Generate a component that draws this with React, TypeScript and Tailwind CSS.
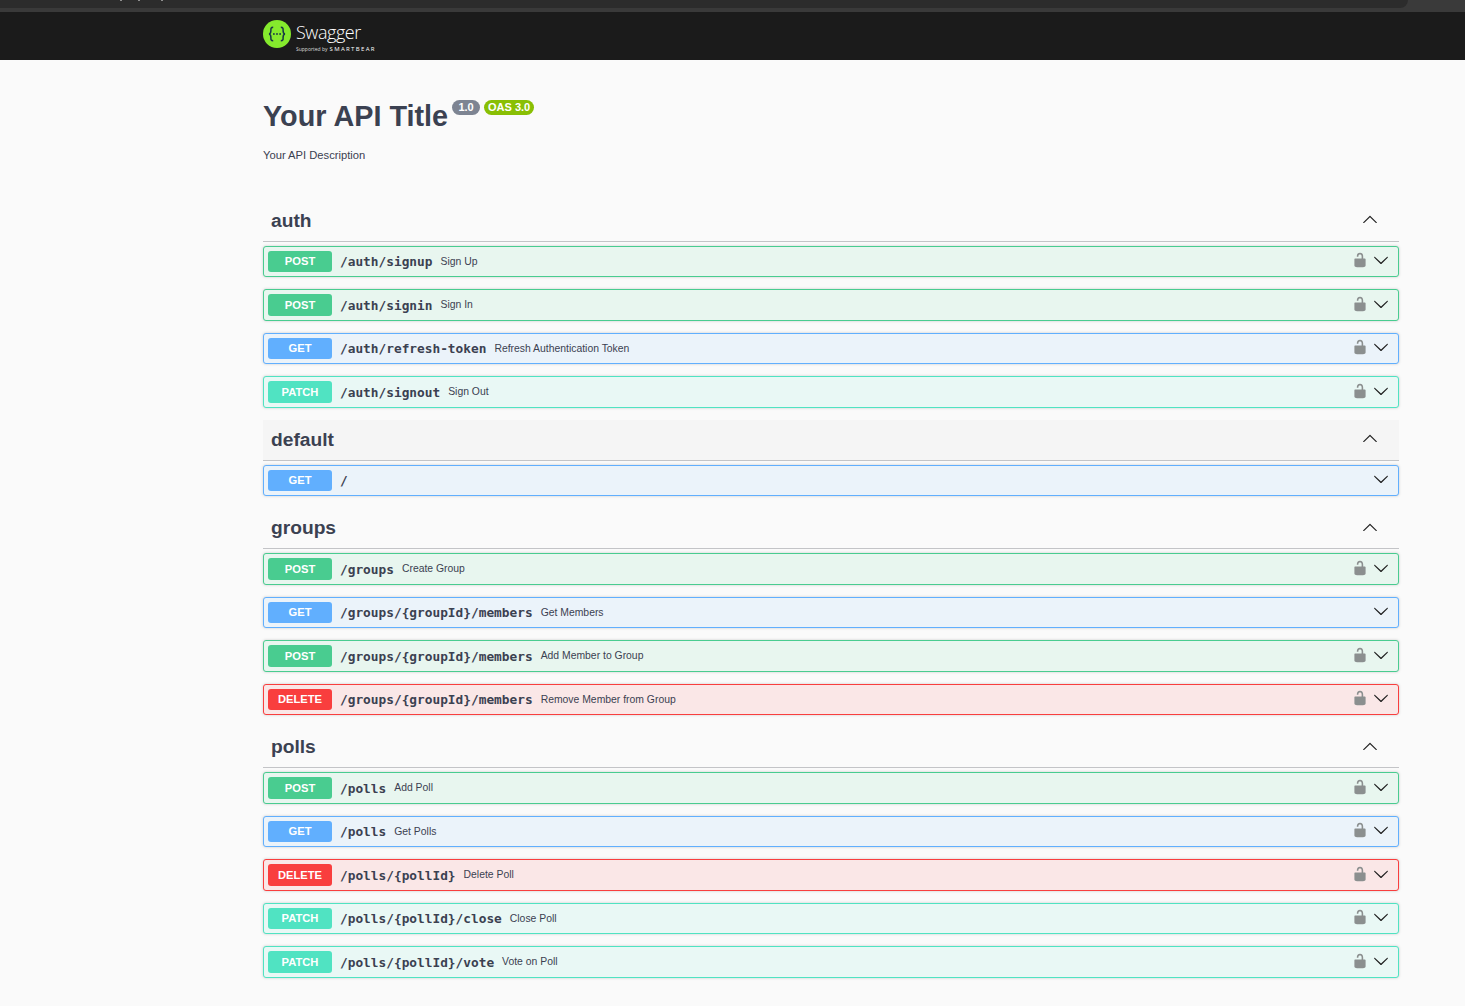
import React from 'react';

type Method = 'POST' | 'GET' | 'PATCH' | 'DELETE';

type Op = {
  method: Method;
  path: string;
  summary?: string;
  locked?: boolean;
};

const SECTIONS: { name: string; hovered?: boolean; ops: Op[] }[] = [
  {
    name: 'auth',
    ops: [
      { method: 'POST', path: '/auth/signup', summary: 'Sign Up', locked: true },
      { method: 'POST', path: '/auth/signin', summary: 'Sign In', locked: true },
      { method: 'GET', path: '/auth/refresh-token', summary: 'Refresh Authentication Token', locked: true },
      { method: 'PATCH', path: '/auth/signout', summary: 'Sign Out', locked: true },
    ],
  },
  {
    name: 'default',
    hovered: true,
    ops: [{ method: 'GET', path: '/' }],
  },
  {
    name: 'groups',
    ops: [
      { method: 'POST', path: '/groups', summary: 'Create Group', locked: true },
      { method: 'GET', path: '/groups/{groupId}/members', summary: 'Get Members' },
      { method: 'POST', path: '/groups/{groupId}/members', summary: 'Add Member to Group', locked: true },
      { method: 'DELETE', path: '/groups/{groupId}/members', summary: 'Remove Member from Group', locked: true },
    ],
  },
  {
    name: 'polls',
    ops: [
      { method: 'POST', path: '/polls', summary: 'Add Poll', locked: true },
      { method: 'GET', path: '/polls', summary: 'Get Polls', locked: true },
      { method: 'DELETE', path: '/polls/{pollId}', summary: 'Delete Poll', locked: true },
      { method: 'PATCH', path: '/polls/{pollId}/close', summary: 'Close Poll', locked: true },
      { method: 'PATCH', path: '/polls/{pollId}/vote', summary: 'Vote on Poll', locked: true },
    ],
  },
];

const ROW_STYLES: Record<Method, { row: string; badge: string }> = {
  POST: { row: 'border-[#49cc90] bg-[#e8f6ef]', badge: 'bg-[#49cc90]' },
  GET: { row: 'border-[#61affe] bg-[#ebf3fa]', badge: 'bg-[#61affe]' },
  PATCH: { row: 'border-[#50e3c2] bg-[#e9f8f5]', badge: 'bg-[#50e3c2]' },
  DELETE: { row: 'border-[#f93e3e] bg-[#fae7e7]', badge: 'bg-[#f93e3e]' },
};

const ChevronDown = () => (
  <svg viewBox="0 0 20 20" className="h-4 w-4 fill-[#1f1f1f]">
    <path d="M17.418 6.109c.272-.268.709-.268.979 0s.271.701 0 .969l-7.908 7.83c-.27.268-.707.268-.979 0l-7.908-7.83c-.27-.268-.27-.701 0-.969.271-.268.709-.268.979 0L10 13.25l7.418-7.141z" />
  </svg>
);

const ChevronUp = () => (
  <svg viewBox="0 0 20 20" className="mb-1 h-4 w-4 fill-[#1f1f1f]">
    <path d="M17.418 14.908c.272.268.709.268.979 0s.271-.701 0-.969l-7.908-7.83c-.27-.268-.707-.268-.979 0l-7.908 7.83c-.27.268-.27.701 0 .969.271.268.709.268.979 0L10 7.767l7.418 7.141z" />
  </svg>
);

const OpenLock = () => (
  <svg viewBox="0 0 20 20" className="h-4 w-4 fill-[#8b8f8f]">
    <path d="M15.8 8H14V5.6C14 2.703 12.665 1 10 1 7.334 1 6 2.703 6 5.6V6h2v-.801C8 3.754 8.797 3 10 3c1.203 0 2 .754 2 2.199V8H4c-.553 0-1 .646-1 1.199V17c0 .549.428 1.139.951 1.307l1.197.387C5.672 18.861 6.55 19 7.1 19h5.8c.549 0 1.428-.139 1.951-.307l1.196-.387c.524-.167.953-.757.953-1.306V9.199C17 8.646 16.352 8 15.8 8z" />
  </svg>
);

const SwaggerMark = () => (
  <svg viewBox="0 0 28 28" className="h-7 w-7">
    <circle cx="14" cy="14" r="14" fill="#85ea2d" />
    <path
      d="M10.2 7.2c-2.6 0-2.3 1.5-2.3 3.3 0 1.8-.4 3.3-1.9 3.5 1.5.2 1.9 1.7 1.9 3.5 0 1.8-.3 3.3 2.3 3.3M17.8 7.2c2.6 0 2.3 1.5 2.3 3.3 0 1.8.4 3.3 1.9 3.5-1.5.2-1.9 1.7-1.9 3.5 0 1.8.3 3.3-2.3 3.3"
      fill="none"
      stroke="#173647"
      strokeWidth="1.5"
    />
    <circle cx="10.9" cy="14" r="0.9" fill="#173647" />
    <circle cx="14" cy="14" r="0.9" fill="#173647" />
    <circle cx="17.1" cy="14" r="0.9" fill="#173647" />
  </svg>
);

const OpRow = ({ op }: { op: Op }) => {
  const styles = ROW_STYLES[op.method];
  return (
    <div className={`mb-3 flex h-[31.5px] items-center rounded-[3px] border-[1.6px] pl-[3.5px] pr-[9px] pt-[0.3px] shadow-[0_0_3px_rgba(0,0,0,0.19)] ${styles.row}`}>
      <span className={`flex h-[21.5px] w-[64px] items-center justify-center rounded-[3px] pl-[1px] text-[11.2px] font-bold text-white ${styles.badge}`}>
        {op.method}
      </span>
      <span className="ml-[8.5px] font-['DejaVu_Sans_Mono',monospace] text-[12.8px] font-bold text-[#3b4151]">
        {op.path}
      </span>
      {op.summary && <span className="ml-2 text-[10.4px] text-[#3b4151]">{op.summary}</span>}
      <span className="mb-[3px] ml-auto flex items-center gap-[5px]">
        {op.locked && <OpenLock />}
        <ChevronDown />
      </span>
    </div>
  );
};

export default function App() {
  return (
    <div className="min-h-screen bg-[#fafafa] font-['Liberation_Sans',Arial,sans-serif] text-[#3b4151]">
      <div className="relative flex h-3 bg-[#3a3a3a]">
        <div className="h-2 w-[1408px] rounded-br-[10px] bg-[#2c2c2c]" />
        <span className="absolute left-[120px] top-0 h-px w-[2px] bg-[#8f8f8f]" />
        <span className="absolute left-[138px] top-0 h-px w-[2px] bg-[#8f8f8f]" />
        <span className="absolute left-[161px] top-0 h-px w-[2px] bg-[#8f8f8f]" />
      </div>
      <header className="flex h-12 items-start bg-[#1b1b1b] pl-[263px] pt-2">
        <SwaggerMark />
        <div className="ml-[5px] flex flex-col text-white">
          <span className="font-['Open_Sans',sans-serif] text-[18px] font-light leading-[24px] tracking-[-0.45px]">Swagger</span>
          <span className="mt-[1px] flex items-center gap-[2px] font-['Open_Sans',sans-serif] text-[5px] leading-[8px] text-[#dddddd]">
            Supported by <span className="text-[6px] font-medium leading-[8px] tracking-[1.35px] text-white">SMARTBEAR</span>
          </span>
        </div>
      </header>

      <main className="ml-[263px] w-[1136px]">
        <div className="flex items-start pt-[38px]">
          <h1 className="text-[28.8px] font-bold leading-[36px]">Your API Title</h1>
          <span className="ml-1 mt-[2px] flex h-[15px] w-[28px] items-center justify-center rounded-[8px] bg-[#7d8492] text-[11px] font-bold text-white">1.0</span>
          <span className="ml-1 mt-[2px] flex h-[15px] w-[50px] items-center justify-center rounded-[8px] bg-[#89bf04] text-[11px] font-bold text-white">OAS 3.0</span>
        </div>
        <p className="mt-[14px] text-[11.2px] leading-[14px]">Your API Description</p>

        <div className="mt-[38.75px]">
          {SECTIONS.map((section) => (
            <section key={section.name}>
              <div className={`mb-1 flex h-[41px] items-center justify-between border-b border-[#c3c4c7] pl-2 pr-[21px] pt-[0.5px] ${section.hovered ? 'bg-[#f5f5f5]' : ''}`}>
                <h3 className="text-[19.2px] font-bold">{section.name}</h3>
                <ChevronUp />
              </div>
              {section.ops.map((op) => (
                <OpRow key={op.method + op.path} op={op} />
              ))}
            </section>
          ))}
        </div>
      </main>
    </div>
  );
}
